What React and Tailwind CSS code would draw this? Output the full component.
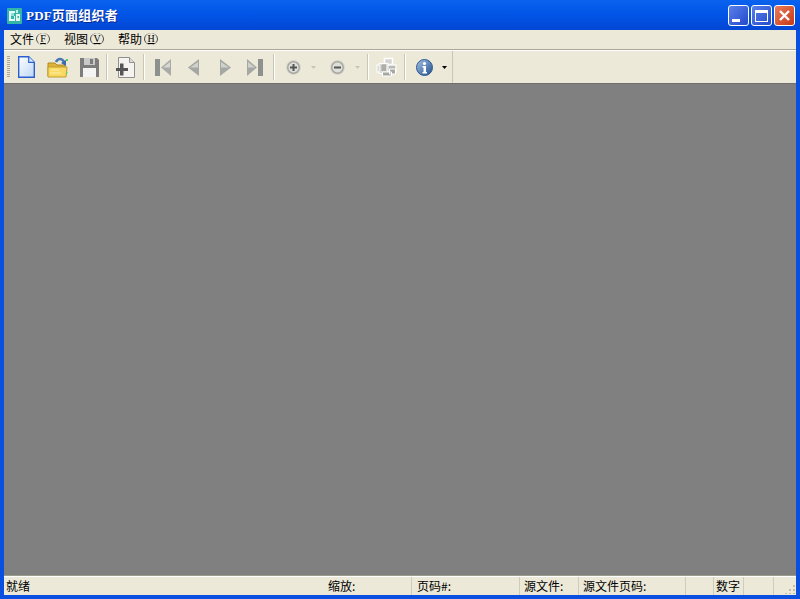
const cjk = { fontFamily: '"Noto Sans CJK SC", "Liberation Sans", sans-serif' };

function Sep() {
  return <div className="w-[2px] h-[26px] border-l border-r border-l-[#c8c6b4] border-r-white shrink-0" />;
}
function Btn({ w, children }) {
  return <div className={`flex items-center justify-center shrink-0 h-full ${w}`}>{children}</div>;
}
function Drop({ color = "#c8c5b5" }) {
  return <svg width="5" height="3" viewBox="0 0 5 3" className="shrink-0"><path d="M0 0h5L2.500 3z" fill={color} /></svg>;
}
const NewIcon = () => (
  <svg width="17" height="22" viewBox="0 0 17 22">
    <defs><linearGradient id="n" x1="0" y1="0" x2="1" y2="1"><stop offset="0" stopColor="#fff" /><stop offset="1" stopColor="#bcd6f6" /></linearGradient></defs>
    <path d="M.7.7h10l5.600 5.600v15H.7z" fill="url(#n)" stroke="#2a5fd0" strokeWidth="1.400" />
    <path d="M10.700.7v5.600h5.600" fill="#dbe8fa" stroke="#2a5fd0" strokeWidth="1.200" />
  </svg>
);
const OpenIcon = () => (
  <svg width="21" height="21" viewBox="0 0 21 21">
    <path d="M1 6h7l2 2h8v11H1z" fill="#e0b23a" stroke="#b08a20" strokeWidth="1" />
    <path d="M1 10h19l-1 10H1z" fill="#f8da62" stroke="#c09c2c" strokeWidth="1" />
    <path d="M4 13h8M3 16h11" stroke="#fdeeaa" strokeWidth="1" />
    <path d="M9 5c2-4 6-4 8 0" fill="none" stroke="#4a78b5" strokeWidth="2.600" />
    <path d="M14 6l5 3 0-6z" fill="#3b6aa8" />
    <rect x="19" y="2" width="2" height="2" fill="#4cd45a" />
    <rect x="19" y="15" width="1.500" height="1.500" fill="#4cd45a" />
  </svg>
);
const SaveIcon = () => (
  <svg width="19" height="19" viewBox="0 0 19 19">
    <path d="M0 0h17l2 2v17H0z" fill="#7d7d7d" />
    <rect x="3" y="10" width="13" height="9" fill="#f4f4f2" />
    <rect x="4" y="0" width="11" height="7" fill="#c9c9c9" />
    <rect x="10" y="1" width="3" height="5" fill="#7d7d7d" />
  </svg>
);
const AddIcon = () => (
  <svg width="19" height="21" viewBox="0 0 19 21">
    <path d="M2.500.5h11l5 5v15h-16z" fill="#f4f3ef" stroke="#8f8f8f" />
    <path d="M13.500.5v5h5" fill="#dedcd2" stroke="#8f8f8f" />
    <path d="M4 6.500h3.500V11H12v3H7.500v4.500H4V14H0v-3h4z" fill="#555" />
  </svg>
);
const First = () => (
  <svg width="16" height="17" viewBox="0 0 16 17">
    <rect x="0" y="0" width="5" height="17" fill="#8f918e" />
    <path d="M16 0v17L6 8.500z" fill="#a9aba6" /><path d="M15 3L8 8.500h7z" fill="#d6d7d2" />
  </svg>
);
const Prev = () => (
  <svg width="11" height="17" viewBox="0 0 11 17">
    <path d="M11 0v17L0 8.500z" fill="#a5a7a2" /><path d="M10 3L2 8.500h8z" fill="#d0d1cc" />
  </svg>
);
const Next = () => (
  <svg width="11" height="17" viewBox="0 0 11 17">
    <path d="M0 0v17l11-8.500z" fill="#a5a7a2" /><path d="M1 3l8 5.500H1z" fill="#d0d1cc" />
  </svg>
);
const Last = () => (
  <svg width="16" height="17" viewBox="0 0 16 17">
    <rect x="11" y="0" width="5" height="17" fill="#8f918e" />
    <path d="M0 0v17l10-8.500z" fill="#a5a7a2" /><path d="M1 3l7 5.500H1z" fill="#d0d1cc" />
  </svg>
);
const Zoom = ({ plus }) => (
  <svg width="15" height="15" viewBox="0 0 15 15">
    <circle cx="7.500" cy="7.500" r="7" fill="#a8a8a0" stroke="#dcdcd6" />
    <circle cx="7.500" cy="7.500" r="5" fill="#dededa" />
    <rect x="4" y="6.500" width="7" height="2" fill="#555" />
    {plus && <rect x="6.500" y="4" width="2" height="7" fill="#555" />}
  </svg>
);
const Print = () => (
  <svg width="21" height="21" viewBox="0 0 21 21">
    <path d="M8.500 1.500h8v6h-8z" fill="#d4d4d0" stroke="#fff" strokeWidth="1.500" />
    <path d="M1 8h19v7H1z" fill="#b8b8b4" stroke="#f8f8f4" strokeWidth="1.500" />
    <path d="M3 6.500h9v10H3z" fill="#dcdcd8" stroke="#fff" />
    <path d="M13.500 12h6v5h-6zM6.500 15h9v4h-9z" fill="#a6a6a2" stroke="#fff" />
    <path d="M5 9h5M5 11h5M5 13h5M7 7v7M9 7v7" stroke="#96968f" strokeWidth=".8" />
  </svg>
);
const Info = () => (
  <svg width="17" height="17" viewBox="0 0 17 17">
    <defs><linearGradient id="i" x1="0" y1="0" x2="1" y2="1"><stop offset="0" stopColor="#a8c4e6" /><stop offset="1" stopColor="#1f4c8c" /></linearGradient></defs>
    <circle cx="8.500" cy="8.500" r="8" fill="url(#i)" stroke="#2c5a96" />
    <circle cx="8.500" cy="4.500" r="1.600" fill="#fff" />
    <path d="M6.500 7H10v6h1v1.500H6.500V13h1V8.500h-1z" fill="#fff" />
  </svg>
);
const AppIcon = () => (
  <svg width="15" height="16" viewBox="0 0 15 16">
    <rect width="15" height="16" rx="1" fill="#35b5a8" />
    <path d="M2 3h6v2H4v6h3V8h1v5H2z" fill="#e6fbf6" />
    <rect x="9" y="6" width="4" height="7" fill="#dff6f1" />
    <rect x="9" y="2" width="2" height="3" fill="#bff0e8" />
    <rect x="10.500" y="8" width="1.500" height="2" fill="#35b5a8" />
    <rect x="4" y="5" width="3" height="3" fill="#8fe0d6" />
  </svg>
);
function WinBtn({ bg, children }) {
  return (
    <div className={`w-[21px] h-[21px] rounded-[3px] border border-white flex items-center justify-center shrink-0 ${bg}`}>
      {children}
    </div>
  );
}
function Menu({ t, k }) {
  return (
    <span className="flex items-center text-[12px] text-black leading-none">
      {t}
      <span className="ml-[2px] text-[10px] w-[14px] h-[12px] flex items-center justify-center rounded-[50%] border-x border-[#444]">
        <span className="underline" style={{ fontFamily: '"Liberation Serif", serif' }}>{k}</span>
      </span>
    </span>
  );
}
function Cell({ w, children, end }) {
  return (
    <div className={`h-full flex items-center shrink-0 text-[12px] text-black leading-none whitespace-nowrap ${w} ${end ? "" : "border-r border-[#cfccba]"}`}>
      {children}
    </div>
  );
}

export default function App() {
  return (
    <div className="w-[800px] h-[599px] flex flex-col bg-[#0a50e0] overflow-hidden" style={cjk}>
      <div className="h-[30px] shrink-0 flex items-center pl-[7px] pr-[5px] pt-[1px] bg-gradient-to-b from-[#0a62ee] via-[#0254e6] to-[#0346d4]">
        <AppIcon />
        <span className="ml-[4px] text-[13px] font-bold tracking-[0.2px] text-white leading-none" style={{ fontFamily: '"Liberation Serif", "Noto Sans CJK SC", serif', textShadow: "1px 1px 0 #0a2a90" }}>PDF页面组织者</span>
        <div className="ml-auto flex gap-[2px]">
          <WinBtn bg="bg-gradient-to-br from-[#5a80ea] to-[#2448cc]">
            <div className="w-[8px] h-[3px] bg-white mt-[10px] mr-[5px]" />
          </WinBtn>
          <WinBtn bg="bg-gradient-to-br from-[#5a80ea] to-[#2448cc]">
            <div className="w-[13px] h-[12px] border border-white border-t-[3px]" />
          </WinBtn>
          <WinBtn bg="bg-gradient-to-br from-[#e97a58] to-[#c8360e]">
            <svg width="13" height="13" viewBox="0 0 13 13"><path d="M2 2l9 9M11 2l-9 9" stroke="#fff" strokeWidth="2.400" /></svg>
          </WinBtn>
        </div>
      </div>

      <div className="flex-1 min-h-0 mx-[4px] mb-[4px] flex flex-col bg-[#ece9d8]">
        <div className="h-[19px] shrink-0 flex items-center gap-[14px] pl-[6px] pb-[1px]">
          <Menu t="文件" k="F" /><Menu t="视图" k="V" /><Menu t="帮助" k="H" />
        </div>
        <div className="h-[1px] shrink-0 bg-[#aca899]" />
        <div className="h-[1px] shrink-0 bg-white" />
        <div className="h-[32px] shrink-0 flex items-center">
          <div className="w-[3px] h-[22px] ml-[3px] mr-[5px] shrink-0 bg-[repeating-linear-gradient(to_bottom,#a9a692_0,#a9a692_1px,#ece9d8_1px,#ece9d8_2px)]" />
          <Btn w="w-[22px]"><NewIcon /></Btn>
          <Btn w="w-[40px]"><OpenIcon /></Btn>
          <Btn w="w-[24px]"><SaveIcon /></Btn>
          <div className="w-[5px] shrink-0" /><Sep />
          <Btn w="w-[34px]"><AddIcon /></Btn>
          <div className="w-[1px] shrink-0" /><Sep />
          <Btn w="w-[36px]"><First /></Btn>
          <Btn w="w-[24px]"><Prev /></Btn>
          <Btn w="w-[40px]"><Next /></Btn>
          <Btn w="w-[20px]"><Last /></Btn>
          <div className="w-[8px] shrink-0" /><Sep />
          <Btn w="w-[36px]"><Zoom plus /></Btn>
          <Drop />
          <div className="w-[11px] shrink-0" />
          <Btn w="w-[20px]"><Zoom /></Btn>
          <div className="w-[8px] shrink-0" />
          <Drop />
          <div className="w-[7px] shrink-0" /><Sep />
          <Btn w="w-[35px]"><Print /></Btn>
          <Sep />
          <Btn w="w-[36px]"><Info /></Btn>
          <Drop color="#000" />
          <div className="w-[5px] shrink-0" />
          <div className="w-[1px] h-[32px] bg-[#c8c6b4] shrink-0" />
        </div>
        <div className="flex-1 min-h-0 bg-[#808080] border-t border-[#6e6e6e]" />
        <div className="h-[1px] shrink-0 bg-[#9d9b8c]" />
        <div className="h-[1px] shrink-0 bg-white" />
        <div className="h-[18px] shrink-0 flex items-center pl-[2px]">
          <Cell w="w-[322px]" end>就绪</Cell>
          <Cell w="w-[84px]">缩放:</Cell>
          <Cell w="w-[108px] pl-[5px]">页码#:</Cell>
          <Cell w="w-[59px] pl-[4px]">源文件:</Cell>
          <Cell w="w-[107px] pl-[4px]">源文件页码:</Cell>
          <Cell w="w-[28px]"></Cell>
          <Cell w="w-[30px] pl-[2px]">数字</Cell>
          <Cell w="w-[30px]"></Cell>
          <div className="ml-auto self-end mb-[1px]">
            <svg width="11" height="11" viewBox="0 0 11 11" className="block">
              <path d="M8 2h2v2H8zM4 6h2v2H4zM8 6h2v2H8zM0 10h2v1H0zM4 10h2v1H4zM8 10h2v1H8z" fill="#c0bda8" />
            </svg>
          </div>
        </div>
      </div>
    </div>
  );
}
